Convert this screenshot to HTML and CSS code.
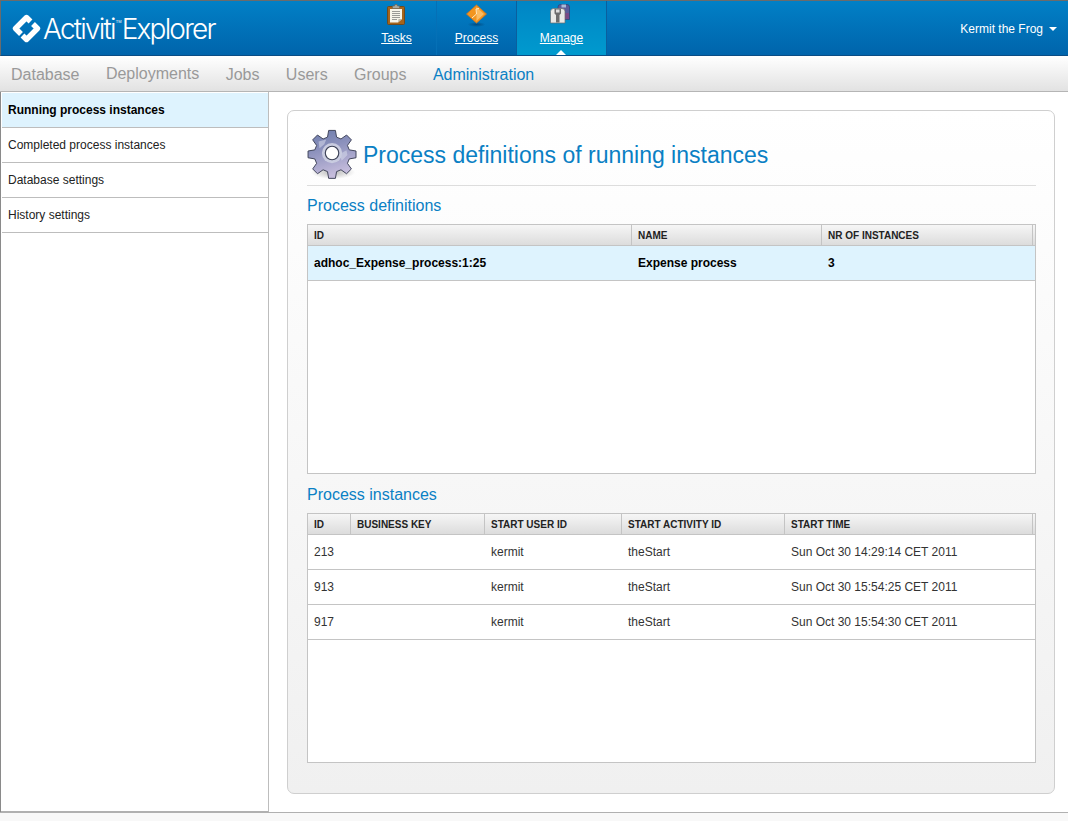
FILE: index.html
```html
<!DOCTYPE html>
<html lang="en">
<head>
<meta charset="utf-8">
<title>Activiti Explorer</title>
<link rel="stylesheet" href="styles.css">
</head>
<body>
<header class="topbar">
  <div class="logo">
    <svg class="logo-mark" width="32" height="32" viewBox="0 0 32 32"><g fill="none" stroke="#fff" stroke-width="5.400" stroke-linejoin="round"><path d="M19.500 8.500 L15.500 4.500 L4.500 15.500 L10 21"/><path d="M22 11 L26.500 15.500 L15.500 26.500 L11.500 22.500"/></g></svg>
    <span class="logo-text">Activiti</span><span class="logo-tm">TM</span><span class="logo-text">Explorer</span>
  </div>
  <nav class="tabs">
    <a class="tab tab-tasks">
      <svg width="25" height="24" viewBox="0 0 25 24">
        <rect x="3.500" y="2.500" width="17" height="18" rx="1" fill="#a5641c" stroke="#6f4a1e"/>
        <path d="M6 5 H18 V15 L14 18.500 H6 Z" fill="#f6f4ea"/>
        <path d="M14 18.500 L14.500 15 H18 Z" fill="#bdb9a8"/>
        <path d="M8 7.500h8M8 9.500h8M8 11.500h8M8 13.500h8M8 15.500h5" stroke="#9a9a96" stroke-width="1"/>
        <path d="M8.500 4.500 V2 H10.500 L11 .5 H13 L13.500 2 H15.500 V4.500 Z" fill="#aaa99f" stroke="#6d6656" stroke-width=".7"/>
      </svg>
      <span>Tasks</span>
    </a>
    <a class="tab tab-process">
      <svg width="25" height="24" viewBox="0 0 25 24">
        <defs><radialGradient id="procshadow"><stop offset="0" stop-color="#002d55" stop-opacity=".55"/><stop offset="1" stop-color="#002d55" stop-opacity="0"/></radialGradient></defs>
        <ellipse cx="12.500" cy="20.500" rx="9" ry="2.500" fill="url(#procshadow)"/>
        <path d="M12.500 1 L22.500 10 L12.500 19 L2.500 10 Z" fill="#f2951f" stroke="#d8741a" stroke-width=".8"/>
        <path d="M12.500 3 L20 10 L12.500 17 Z" fill="#fabb62"/>
        <path d="M8 14 L12.500 10 L12 5 L15 4.500" stroke="#ffe9c2" stroke-width="1" fill="none"/>
      </svg>
      <span>Process</span>
    </a>
    <a class="tab tab-manage active">
      <svg width="25" height="24" viewBox="0 0 25 24">
        <path d="M9 15.500 V3 Q9 .5 11.500 .5 H18 Q20.500 .5 20.500 3 V15.500 Z" fill="#5a5c9a" stroke="#2f3f72" stroke-width=".7"/>
        <rect x="12.500" y=".5" width="4.500" height="3" fill="#a9bbd8"/>
        <rect x="16" y="9" width="4" height="6" fill="#7a4a86"/>
        <path d="M1.500 19 V7.500 Q1.500 4.500 4.500 4.500 H13 Q16 4.500 16 7.500 V19 Z" fill="#e9e9e6" stroke="#6a6a6a" stroke-width=".7"/>
        <path d="M5.500 5 H12 V9.500 L10.500 11 V18.500 H7 V11 L5.500 9.500 Z" fill="#6c6c6c"/>
        <rect x="7" y="5.500" width="3.500" height="3" fill="#ddd"/>
      </svg>
      <span>Manage</span>
    </a>
  </nav>
  <div class="user">Kermit the Frog<span class="caret"></span></div>
</header>
<nav class="subnav">
  <a class="subitem">Database</a>
  <a class="subitem raised">Deployments</a>
  <a class="subitem">Jobs</a>
  <a class="subitem">Users</a>
  <a class="subitem">Groups</a>
  <a class="subitem current">Administration</a>
</nav>
<div class="workspace">
  <aside class="sidebar">
    <div class="side-row selected">Running process instances</div>
    <div class="side-row">Completed process instances</div>
    <div class="side-row">Database settings</div>
    <div class="side-row">History settings</div>
  </aside>
  <main class="content">
    <section class="panel">
      <div class="title-row">
        <svg class="gear" width="52" height="52" viewBox="0 0 54 54">
          <defs>
            <linearGradient id="gearfill" x1="0" y1="0" x2="0.3" y2="1"><stop offset="0" stop-color="#6c7cab"/><stop offset=".45" stop-color="#8d92bd"/><stop offset="1" stop-color="#c5bcdc"/></linearGradient>
            <radialGradient id="gearshadow"><stop offset="0" stop-color="#000" stop-opacity=".28"/><stop offset="1" stop-color="#000" stop-opacity="0"/></radialGradient>
          </defs>
          <ellipse cx="27" cy="46" rx="23" ry="7" fill="url(#gearshadow)"/>
          <path fill="url(#gearfill)" stroke="#3d4257" stroke-width="1" d="M22.500 2.500h7l1.200 7 4.600 1.900 5.800-4.100 5 5-4.100 5.800 1.900 4.600 7 1.200v7l-7 1.200-1.900 4.600 4.100 5.800-5 5-5.800-4.100-4.600 1.900-1.200 7h-7l-1.200-7-4.600-1.900-5.800 4.100-5-5 4.100-5.800-1.900-4.600-7-1.200v-7l7-1.200 1.900-4.600-4.100-5.800 5-5 5.800 4.100 4.600-1.900z"/>
          <path d="M12 14 l8 -2 l-2 5 l-5 4z M34 27 l7 -4 l1 5 l-6 6z" fill="#d7dbeb" opacity=".55"/>
          <circle cx="26" cy="26" r="10.500" fill="#c9cce0"/>
          <circle cx="26" cy="26" r="7" fill="#fff" stroke="#3d4257" stroke-width="1.200"/>
        </svg>
        <h1 class="page-title">Process definitions of running instances</h1>
      </div>
      <h2 class="section-title first">Process definitions</h2>
      <div class="table">
        <div class="thead cols-def">
          <div class="th">ID</div><div class="th">NAME</div><div class="th">NR OF INSTANCES</div><div class="th-end"></div>
        </div>
        <div class="tr cols-def selected-row">
          <div class="td">adhoc_Expense_process:1:25</div><div class="td">Expense process</div><div class="td">3</div>
        </div>
      </div>
      <h2 class="section-title">Process instances</h2>
      <div class="table">
        <div class="thead cols-inst">
          <div class="th">ID</div><div class="th">BUSINESS KEY</div><div class="th">START USER ID</div><div class="th">START ACTIVITY ID</div><div class="th">START TIME</div><div class="th-end"></div>
        </div>
        <div class="tr cols-inst">
          <div class="td">213</div><div class="td"></div><div class="td">kermit</div><div class="td">theStart</div><div class="td">Sun Oct 30 14:29:14 CET 2011</div>
        </div>
        <div class="tr cols-inst">
          <div class="td">913</div><div class="td"></div><div class="td">kermit</div><div class="td">theStart</div><div class="td">Sun Oct 30 15:54:25 CET 2011</div>
        </div>
        <div class="tr cols-inst">
          <div class="td">917</div><div class="td"></div><div class="td">kermit</div><div class="td">theStart</div><div class="td">Sun Oct 30 15:54:30 CET 2011</div>
        </div>
      </div>
    </section>
  </main>
</div>
<footer class="footer"></footer>
</body>
</html>
```
FILE: styles.css
```css
* { box-sizing: border-box; }
html, body { margin: 0; height: 821px; overflow: hidden; }
body {
  display: flex;
  flex-direction: column;
  font-family: "Liberation Sans", Arial, sans-serif;
  background: #fff;
  color: #222;
}
.topbar {
  height: 56px;
  flex: none;
  display: flex;
  align-items: stretch;
  position: relative;
  border-top: 1px solid #6b6b6b;
  border-left: 1px solid #6b6b6b;
  border-bottom: 1px solid #0a4d85;
  background: linear-gradient(#0180c6, #0064ab);
}
.logo {
  width: 356px;
  flex: none;
  display: flex;
  align-items: flex-start;
  padding: 12px 0 0 10px;
  color: #fff;
}
.logo-mark { flex: none; }
.logo-text {
  font-family: "Inter", "Liberation Sans", sans-serif;
  font-weight: 300;
  font-size: 28px;
  line-height: 32px;
  letter-spacing: -1.8px;
}
.logo-tm { font-size: 4px; line-height: 18px; margin: 0 0 0 1px; }
.tabs { display: flex; flex: none; }
.tab {
  width: 80px;
  display: flex;
  flex-direction: column;
  align-items: center;
  padding-top: 3px;
  color: #fff;
  font-size: 12px;
  border-right: 1px solid #0a5f9e;
}
.tab span { text-decoration: underline; margin-top: 3px; line-height: 14px; }
.tab-tasks { width: 80px; border-right: 1px solid #0570b6; }
.tab-process { width: 80px; }
.tab-manage { width: 90px; }
.tab.active {
  position: relative;
  background: linear-gradient(#0085c5, #009ace);
}
.tab.active::after {
  content: "";
  position: absolute;
  left: 39px;
  bottom: 0;
  border-left: 5px solid transparent;
  border-right: 5px solid transparent;
  border-bottom: 5px solid #fff;
}
.user {
  margin-left: auto;
  padding: 21px 11px 0 0;
  font-size: 12px;
  line-height: 14px;
  color: #fff;
}
.caret {
  display: inline-block;
  margin-left: 6px;
  vertical-align: 2px;
  border-left: 4px solid transparent;
  border-right: 4px solid transparent;
  border-top: 4px solid #fff;
}
.subnav {
  height: 36px;
  flex: none;
  display: flex;
  align-items: center;
  gap: 26.4px;
  padding: 2px 0 0 11px;
  border-bottom: 1px solid #b5b5b5;
  background: linear-gradient(#fff, #e2e2e2);
  font-size: 16px;
  color: #999;
}
.subitem { line-height: 18px; }
.raised { margin-bottom: 2px; }
.current { color: #0a80c4; }
.workspace { flex: 1; display: flex; min-height: 0; border-left: 1px solid #8a8a8a; }
.sidebar {
  width: 268px;
  flex: none;
  padding: 1px 0 0 1px;
  border-right: 1px solid #bdbdbd;
  border-bottom: 1px solid #b0b0b0;
}
.side-row {
  height: 35px;
  padding-left: 6px;
  display: flex;
  align-items: center;
  font-size: 12px;
  color: #222;
  border-bottom: 1px solid #bdbdbd;
}
.side-row.selected { background: #def3fe; font-weight: 700; color: #000; }
.content { flex: 1; padding: 18px 13px 18px 18px; min-width: 0; }
.panel {
  height: 100%;
  padding: 16px 18px 30px 19px;
  border: 1px solid #cfcfcf;
  border-radius: 7px;
  background: linear-gradient(#fff 0%, #f0f0f0 100%);
}
.title-row {
  height: 59px;
  display: flex;
  align-items: flex-start;
  border-bottom: 1px solid #ddd;
}
.gear { flex: none; margin: 1px 4px 0 0; }
.page-title {
  margin: 13px 0 0;
  font-weight: 400;
  font-size: 23px;
  line-height: 30px;
  color: #0a80c4;
}
.section-title {
  margin: 0;
  padding: 11px 0 9px;
  font-weight: 400;
  font-size: 16px;
  line-height: 19px;
  color: #0a80c4;
}
.section-title.first { padding-top: 10px; }
.table {
  height: 250px;
  border: 1px solid #c4c4c4;
  background: #fff;
}
.thead, .tr { display: grid; }
.cols-def { grid-template-columns: 324px 190px 211px 3px; }
.cols-inst { grid-template-columns: 43px 134px 137px 163px 248px 3px; }
.thead {
  height: 21px;
  border-bottom: 1px solid #c4c4c4;
  background: linear-gradient(#f6f6f6, #dcdcdc);
}
.th {
  padding-left: 6px;
  font-size: 10px;
  line-height: 21px;
  font-weight: 700;
  color: #222;
  border-right: 1px solid #c4c4c4;
  white-space: nowrap;
}
.th-end { background: transparent; }
.tr {
  height: 35px;
  border-bottom: 1px solid #c4c4c4;
  background: #fff;
}
.td {
  padding-left: 6px;
  font-size: 12px;
  line-height: 34px;
  color: #333;
  white-space: nowrap;
}
.selected-row { background: #def3fe; }
.selected-row .td { font-weight: 700; color: #000; }
.footer {
  height: 9px;
  flex: none;
  border-top: 1px solid #b0b0b0;
  background: #f8f8f8;
}
```
